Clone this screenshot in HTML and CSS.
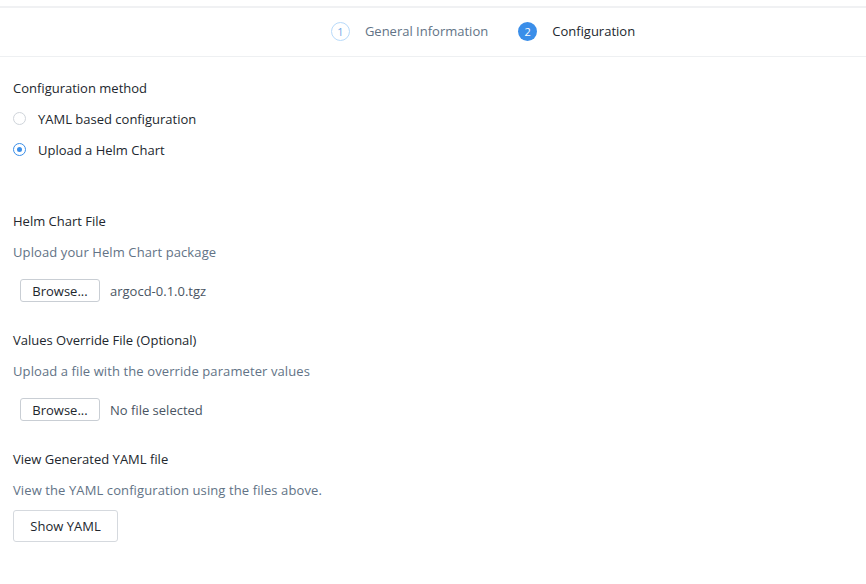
FILE: index.html
```html
<!DOCTYPE html>
<html>
<head>
<meta charset="utf-8">
<link rel="stylesheet" href="styles.css">
</head>
<body>
<div class="page">
  <header class="stepper">
    <div class="step">
      <span class="num num-outline">1</span>
      <span class="step-label muted">General Information</span>
    </div>
    <div class="step">
      <span class="num num-active">2</span>
      <span class="step-label">Configuration</span>
    </div>
  </header>
  <main class="content">
    <div class="title first">Configuration method</div>
    <label class="radio-row"><span class="radio"></span>YAML based configuration</label>
    <label class="radio-row"><span class="radio checked"></span>Upload a Helm Chart</label>

    <section class="group spaced">
      <div class="title">Helm Chart File</div>
      <div class="desc">Upload your Helm Chart package</div>
      <div class="file-row"><span class="btn-small">Browse...</span><span class="file-name">argocd-0.1.0.tgz</span></div>
    </section>

    <section class="group">
      <div class="title">Values Override File (Optional)</div>
      <div class="desc">Upload a file with the override parameter values</div>
      <div class="file-row"><span class="btn-small">Browse...</span><span class="file-name">No file selected</span></div>
    </section>

    <section class="group">
      <div class="title">View Generated YAML file</div>
      <div class="desc">View the YAML configuration using the files above.</div>
      <button class="btn">Show YAML</button>
    </section>
  </main>
</div>
</body>
</html>
```

FILE: styles.css
```css
* { box-sizing: border-box; }
html, body { margin: 0; padding: 0; background: #fff; }
body {
  font-family: "Open Sans", "Liberation Sans", sans-serif;
  font-size: 13px;
  color: #22272e;
}
.page { padding-top: 6px; }
.stepper {
  height: 51px;
  border-top: 2px solid #f0f1f3;
  border-bottom: 1px solid #eef0f2;
  display: flex;
  justify-content: center;
  align-items: center;
  gap: 30px;
  padding-left: 100px;
  padding-bottom: 2px;
}
.step { display: flex; align-items: center; gap: 15px; }
.num {
  width: 19px; height: 19px;
  border-radius: 50%;
  display: flex; align-items: center; justify-content: center;
  font-size: 11px;
  line-height: 1;
}
.num-outline { border: 1px solid #b8dafa; color: #6fa8e8; }
.num-active { background: #3a8ee9; color: #fff; }
.step-label { color: #22272e; }
.muted { color: #627386; }

.content { padding-left: 13px; }
.title { line-height: 20px; height: 20px; color: #22272e; }
.title.first { margin-top: 21px; margin-bottom: 5px; }
.radio-row { display: flex; align-items: center; height: 31px; gap: 12px; }
.radio {
  width: 13px; height: 13px; border-radius: 50%;
  border: 1px solid #cfd4da; background: #fff;
  display: flex; align-items: center; justify-content: center;
}
.radio.checked { border-color: #3a8ee9; }
.radio.checked::after {
  content: ""; width: 5px; height: 5px; border-radius: 50%; background: #3a8ee9;
}

.group { margin-top: 28px; }
.group.spaced { margin-top: 46px; }
.desc { line-height: 20px; height: 20px; margin-top: 11px; color: #627386; letter-spacing: 0.1px; }
.file-row { display: flex; align-items: center; margin-top: 17px; padding-left: 7px; gap: 10px; height: 23px; }
.btn-small {
  width: 80px; height: 23px;
  border: 1px solid #c9ced4; border-radius: 3px;
  display: flex; align-items: center; justify-content: center;
  color: #22272e;
}
.file-name { color: #4a5563; }
.btn {
  margin-top: 10px;
  display: block;
  width: 105px; height: 32px;
  border: 1px solid #d5d9de; border-radius: 3px;
  background: #fff;
  font: inherit; color: #22272e;
}
```
